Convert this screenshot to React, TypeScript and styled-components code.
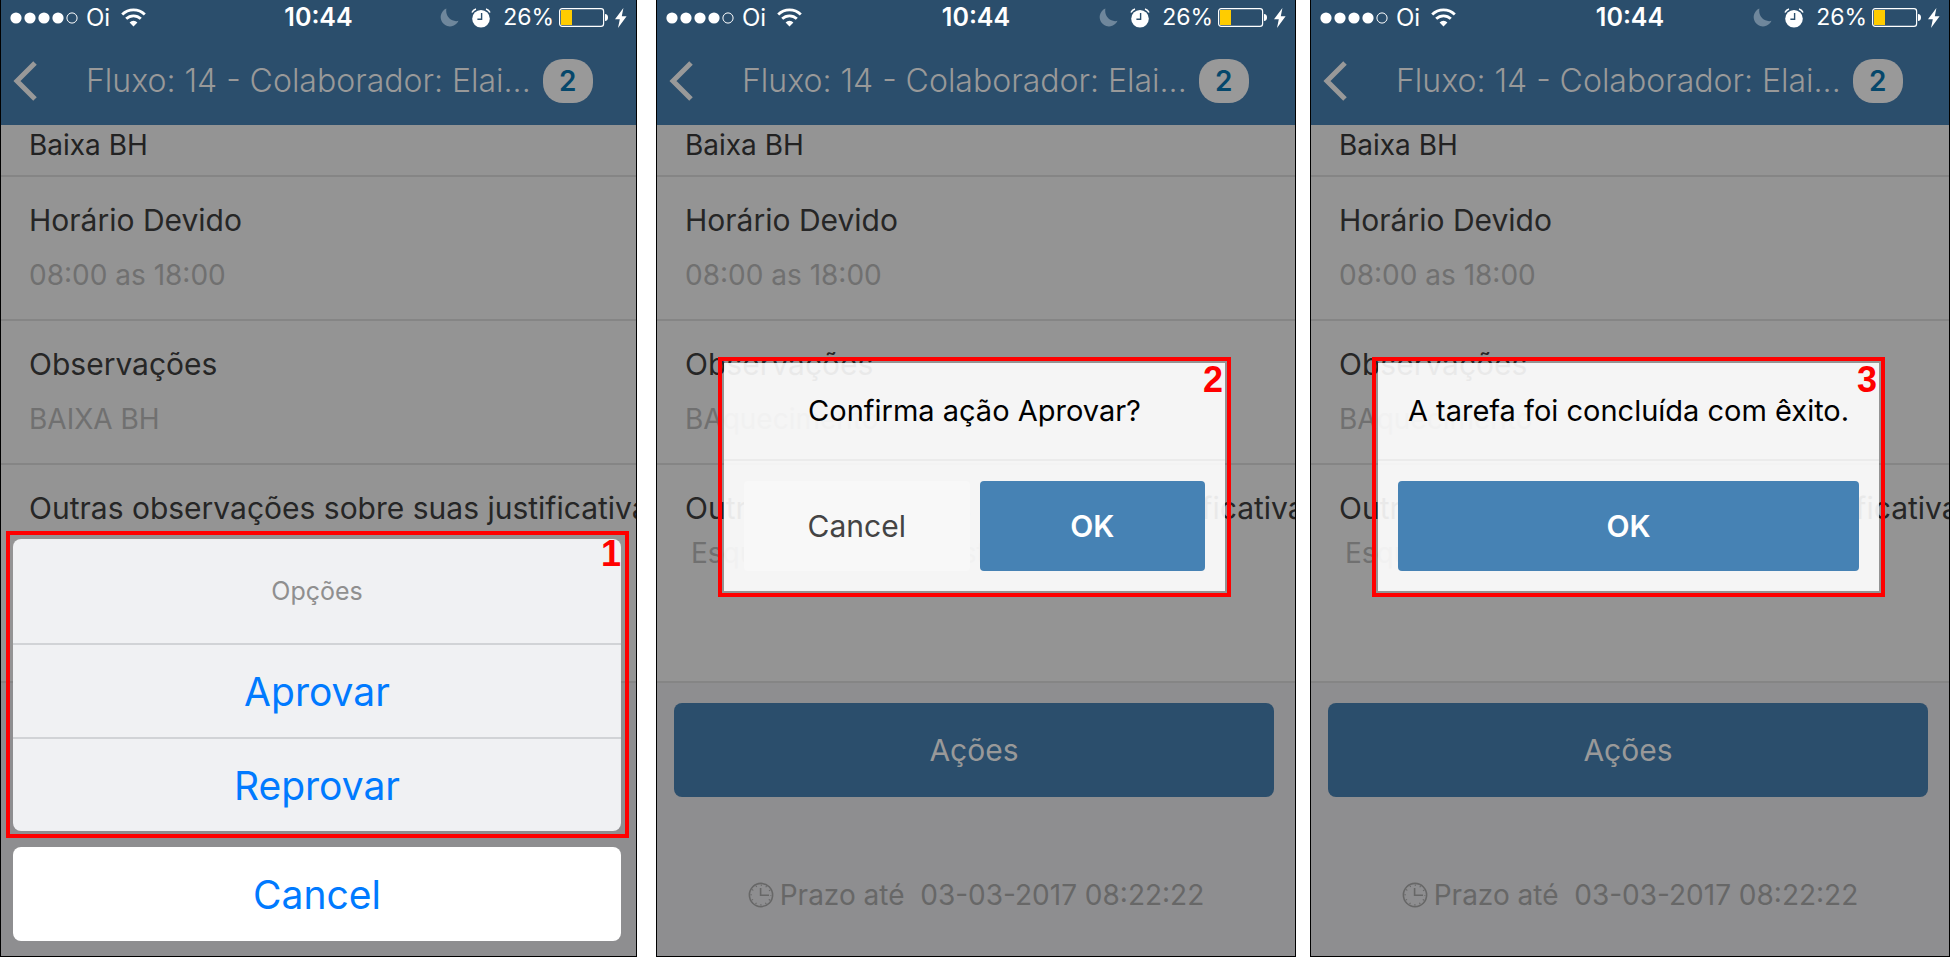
import React from "react";
import styled, { createGlobalStyle } from "styled-components";

const GlobalStyle = createGlobalStyle`
  *, *::before, *::after { box-sizing: border-box; }
  body {
    margin: 0;
    background: #ffffff;
    font-family: Inter, "Liberation Sans", sans-serif;
  }
  h1, h2, p, dl, dt, dd { margin: 0; font-weight: 400; }
  button { font-family: inherit; border: 0; padding: 0; margin: 0; cursor: pointer; }
`;

const Screens = styled.main`
  display: grid;
  grid-template-columns: minmax(0, 637fr) 19px minmax(0, 640fr) 14px minmax(0, 640fr);
`;

const Phone = styled.section<{ $column: number }>`
  position: relative;
  display: flex;
  flex-direction: column;
  grid-column: ${(p) => p.$column};
  border: 1px solid #000000;
  border-top: 0;
  background: #949494;
  overflow: hidden;
`;

const Header = styled.header`
  height: 125px;
  background: #2b4e6c;
`;

const StatusBar = styled.div`
  display: grid;
  grid-template-columns: 1fr auto 1fr;
  align-items: center;
  height: 35px;
  padding: 0 9px;
  color: #ffffff;
  font-size: 24px;
  line-height: 35px;
`;

const StatusGroup = styled.div<{ $end?: boolean }>`
  display: flex;
  align-items: center;
  justify-content: ${(p) => (p.$end ? "flex-end" : "flex-start")};
`;

const Carrier = styled.span`
  margin: 0 11px 0 7px;
`;

const Time = styled.time`
  font-size: 25px;
  font-weight: 600;
`;

const AlarmSlot = styled.span`
  display: flex;
  margin-left: 12px;
`;

const Percent = styled.span`
  margin: 0 5px 0 12px;
  font-size: 23px;
`;

const BoltSlot = styled.span`
  display: flex;
  margin-left: 6px;
`;

const TitleBar = styled.div`
  display: flex;
  align-items: center;
  height: 90px;
  padding: 2px 0 0 12px;
`;

const BackButton = styled.button`
  display: flex;
  flex: none;
  background: none;
  color: #999999;
`;

const Title = styled.h1`
  margin-left: 49px;
  color: #999999;
  font-size: 32px;
  font-weight: 300;
  line-height: 40px;
  white-space: nowrap;
`;

const Badge = styled.span`
  flex: none;
  width: 50px;
  height: 44px;
  margin-left: 12px;
  border-radius: 20px;
  background: #999999;
  color: #05476b;
  font-size: 28px;
  font-weight: 600;
  line-height: 44px;
  text-align: center;
`;

const Fields = styled.dl`
  color: #262626;
  white-space: nowrap;
`;

const Field = styled.div<{ $kind?: "partial" | "last" }>`
  padding: ${(p) => (p.$kind === "partial" ? "2px 0 12px 28px" : "25px 0 26px 28px")};
  min-height: ${(p) => (p.$kind === "last" ? 218 : 0)}px;
  border-bottom: 2px solid #858585;
`;

const Label = styled.dt`
  font-size: 30px;
  line-height: 36px;
`;

const Value = styled.dd<{ $tone?: "dark" | "option" }>`
  margin-top: ${(p) => (p.$tone === "dark" ? 0 : p.$tone === "option" ? 9 : 19)}px;
  padding-left: ${(p) => (p.$tone === "option" ? 6 : 0)}px;
  color: ${(p) => (p.$tone === "dark" ? "#222222" : "#707070")};
  font-size: 28px;
  line-height: 36px;
`;

const Footer = styled.footer`
  min-height: 273px;
  padding: 20px 21px 0 17px;
  background: #8e8e90;
`;

const ActionsButton = styled.button`
  display: block;
  width: 100%;
  height: 94px;
  border-radius: 8px;
  background: #2b4e6c;
  color: #999999;
  font-size: 30px;
`;

const Deadline = styled.p`
  display: flex;
  align-items: center;
  justify-content: center;
  gap: 6px;
  margin-top: 80px;
  padding-left: 4px;
  color: #676767;
  font-size: 28px;
  line-height: 36px;
  white-space: pre;
`;

const Highlight = styled.div`
  position: relative;
  padding: 2px;
  border: 4px solid #ff0000;
`;

const SheetHighlight = styled(Highlight)`
  padding: 4px 4px 3px 3px;
`;

const Step = styled.span`
  position: absolute;
  top: 1px;
  right: 4px;
  color: #ff0000;
  font-family: "Liberation Sans", Arial, sans-serif;
  font-size: 36px;
  font-weight: 700;
  line-height: 36px;
`;

const SheetArea = styled.div`
  position: absolute;
  right: 7px;
  bottom: 15px;
  left: 5px;
`;

const Sheet = styled.div`
  border-radius: 8px;
  overflow: hidden;
  background: #f0f1f3;
`;

const SheetTitle = styled.h2`
  color: #8f8f8f;
  font-size: 25px;
  line-height: 104px;
  text-align: center;
`;

const SheetButton = styled.button`
  display: block;
  width: 100%;
  height: 94px;
  border-top: 2px solid #d1d3d6;
  background: none;
  color: #007aff;
  font-size: 39px;
`;

const SheetCancel = styled.div`
  margin: 9px 8px 0 7px;
  border-radius: 8px;
  overflow: hidden;
  background: #ffffff;

  ${SheetButton} { border-top: 0; }
`;

const DialogArea = styled.div`
  position: absolute;
  top: 357px;
  right: 64px;
  left: 61px;
`;

const Dialog = styled.div`
  background: rgba(255, 255, 255, 0.9);
`;

const Message = styled.p`
  border-bottom: 2px solid #ebebeb;
  color: #000000;
  font-size: 29px;
  line-height: 96px;
  text-align: center;
  white-space: nowrap;
`;

const DialogButtons = styled.div`
  display: flex;
  gap: 10px;
  padding: 20px;
`;

const DialogButton = styled.button<{ $primary?: boolean }>`
  flex: 1 1 0;
  height: 90px;
  border-radius: 4px;
  background: ${(p) => (p.$primary ? "#4682b4" : "#f8f8f8")};
  color: ${(p) => (p.$primary ? "#ffffff" : "#444444")};
  font-size: 30px;
  font-weight: ${(p) => (p.$primary ? 600 : 400)};
`;

const SignalIcon = () => (
  <svg width="69" height="12" viewBox="0 0 69 12" fill="#fff" aria-hidden="true">
    {[6, 20, 34, 48].map((x) => (
      <circle key={x} cx={x} cy="6" r="5.6" />
    ))}
    <circle cx="62" cy="6" r="5.1" fill="none" stroke="#fff" />
  </svg>
);

const WifiIcon = () => (
  <svg width="25" height="19" viewBox="0 0 25 19" aria-hidden="true">
    <path
      d="M1.2 6.6a16 16 0 0 1 22.6 0M5.2 10.8a10.4 10.4 0 0 1 14.6 0"
      fill="none"
      stroke="#fff"
      strokeWidth="2.8"
    />
    <path d="M12.5 18.6 8.6 14.4a5.6 5.6 0 0 1 7.8 0z" fill="#fff" />
  </svg>
);

const MoonIcon = () => (
  <svg width="19" height="19" viewBox="0 0 19 19" aria-hidden="true">
    <path d="M6.400 .5A9.300 9.300 0 1 0 18.500 12.800C12.500 14.500 4.800 9.500 6.400 .5z" fill="#6f879c" />
  </svg>
);

const AlarmIcon = () => (
  <svg width="20" height="20" viewBox="0 0 20 20" aria-hidden="true">
    <circle cx="10" cy="10.8" r="8.8" fill="#fff" />
    <path d="M1 4.6A6 6 0 0 1 5 1M19 4.6A6 6 0 0 0 15 1" fill="none" stroke="#fff" strokeWidth="1.5" />
    <path d="M10.6 5v6.2H6.4" fill="none" stroke="#2b4e6c" strokeWidth="1.4" />
  </svg>
);

const BatteryIcon = () => (
  <svg width="50" height="19" viewBox="0 0 50 19" aria-hidden="true">
    <rect x=".6" y=".6" width="44" height="17.8" rx="2.6" fill="none" stroke="#fff" strokeWidth="1.2" />
    <path d="M2 2h11v15H2z" fill="#ffcc00" />
    <path d="M46 6q3 .4 3 3.5T46 13z" fill="#fff" />
  </svg>
);

const BoltIcon = () => (
  <svg width="12" height="20" viewBox="0 0 12 20" aria-hidden="true">
    <path d="M8.4 0 0 11.2h4.8L3 20l8.6-11.8H6.8z" fill="#fff" />
  </svg>
);

const BackIcon = () => (
  <svg width="24" height="40" viewBox="0 0 24 40" fill="none" stroke="currentColor" strokeWidth="5" aria-hidden="true">
    <path d="M22 2 4 20 22 38" />
  </svg>
);

const ClockIcon = () => (
  <svg width="26" height="26" viewBox="0 0 26 26" fill="none" stroke="currentColor" strokeWidth="1.6" aria-hidden="true">
    <circle cx="13" cy="13" r="11.6" />
    <path d="M12.6 6v7.2H21" />
    <circle cx="13" cy="13" r="9.8" strokeDasharray="1 4.13" strokeDashoffset=".5" />
  </svg>
);

type ScreenProps = {
  column: number;
  note: string;
  option?: string;
  deadline?: string;
  children: React.ReactNode;
};

const Screen = ({ column, note, option, deadline, children }: ScreenProps) => (
  <Phone $column={column}>
    <Header>
      <StatusBar>
        <StatusGroup>
          <SignalIcon />
          <Carrier>Oi</Carrier>
          <WifiIcon />
        </StatusGroup>
        <Time>10:44</Time>
        <StatusGroup $end>
          <MoonIcon />
          <AlarmSlot>
            <AlarmIcon />
          </AlarmSlot>
          <Percent>26%</Percent>
          <BatteryIcon />
          <BoltSlot>
            <BoltIcon />
          </BoltSlot>
        </StatusGroup>
      </StatusBar>
      <TitleBar>
        <BackButton aria-label="Voltar">
          <BackIcon />
        </BackButton>
        <Title>Fluxo: 14 - Colaborador: Elai...</Title>
        <Badge>2</Badge>
      </TitleBar>
    </Header>
    <Fields>
      <Field $kind="partial">
        <Value $tone="dark">Baixa BH</Value>
      </Field>
      <Field>
        <Label>Horário Devido</Label>
        <Value>08:00 as 18:00</Value>
      </Field>
      <Field>
        <Label>Observações</Label>
        <Value>{note}</Value>
      </Field>
      <Field $kind="last">
        <Label>Outras observações sobre suas justificativas</Label>
        {option && <Value $tone="option">{option}</Value>}
      </Field>
    </Fields>
    <Footer>
      {deadline && (
        <>
          <ActionsButton>Ações</ActionsButton>
          <Deadline>
            <ClockIcon />
            <span>Prazo até{"  "}{deadline}</span>
          </Deadline>
        </>
      )}
    </Footer>
    {children}
  </Phone>
);

export default function App() {
  return (
    <>
      <GlobalStyle />
      <Screens>
        <Screen column={1} note="BAIXA BH">
          <SheetArea role="dialog" aria-label="Opções">
            <SheetHighlight>
              <Sheet>
                <SheetTitle>Opções</SheetTitle>
                <SheetButton>Aprovar</SheetButton>
                <SheetButton>Reprovar</SheetButton>
              </Sheet>
              <Step>1</Step>
            </SheetHighlight>
            <SheetCancel>
              <SheetButton>Cancel</SheetButton>
            </SheetCancel>
          </SheetArea>
        </Screen>
        <Screen column={3} note="BAquecimento" option="Esquecimento do gestor" deadline="03-03-2017 08:22:22">
          <DialogArea role="dialog" aria-label="Confirmação">
            <Highlight>
              <Dialog>
                <Message>Confirma ação Aprovar?</Message>
                <DialogButtons>
                  <DialogButton>Cancel</DialogButton>
                  <DialogButton $primary>OK</DialogButton>
                </DialogButtons>
              </Dialog>
              <Step>2</Step>
            </Highlight>
          </DialogArea>
        </Screen>
        <Screen column={5} note="BAquecimento" option="Esquecimento do gestor" deadline="03-03-2017 08:22:22">
          <DialogArea role="dialog" aria-label="Tarefa concluída">
            <Highlight>
              <Dialog>
                <Message>A tarefa foi concluída com êxito.</Message>
                <DialogButtons>
                  <DialogButton $primary>OK</DialogButton>
                </DialogButtons>
              </Dialog>
              <Step>3</Step>
            </Highlight>
          </DialogArea>
        </Screen>
      </Screens>
    </>
  );
}
